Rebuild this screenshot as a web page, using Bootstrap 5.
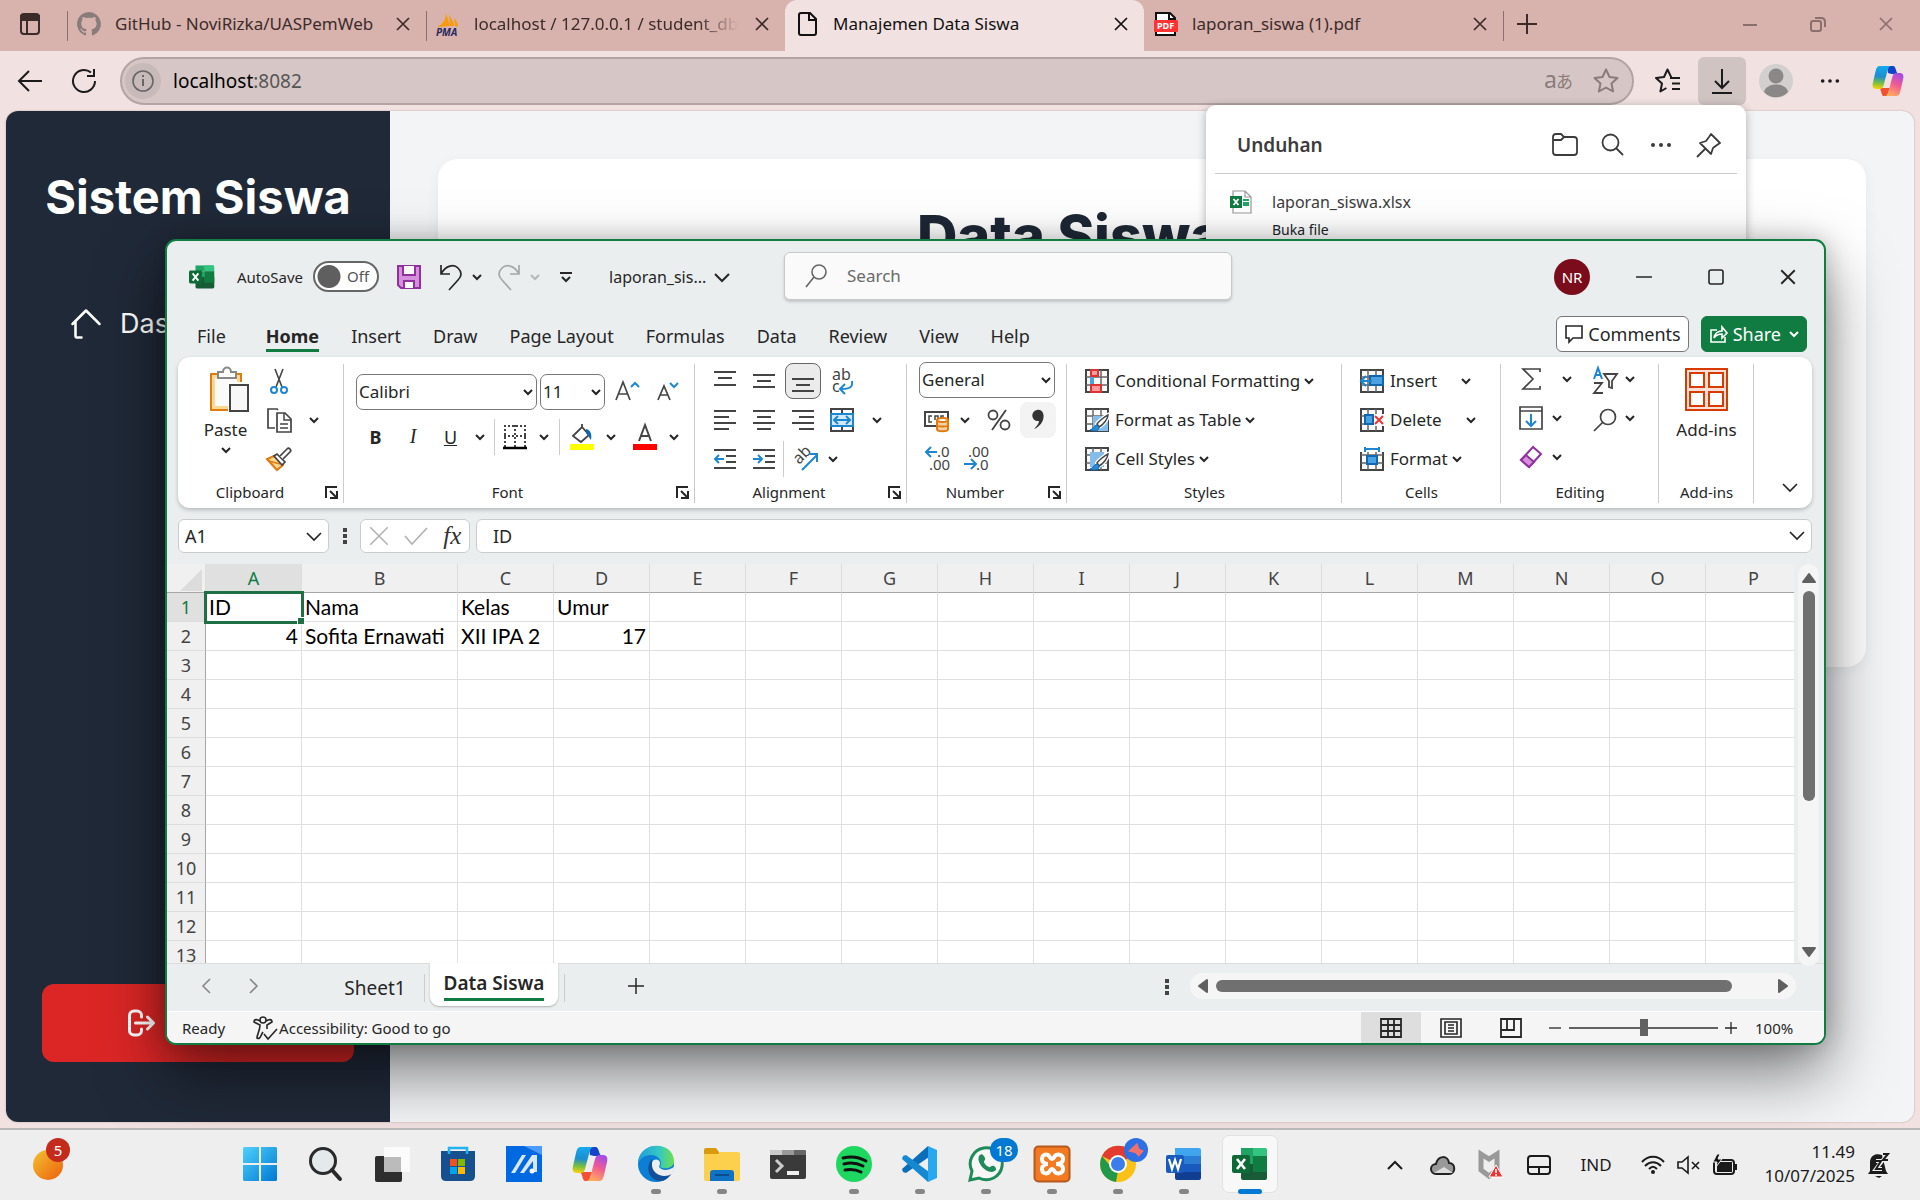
<!DOCTYPE html>
<html lang="id">
<head>
<meta charset="utf-8">
<meta name="viewport" content="width=device-width, initial-scale=1">
<title>Manajemen Data Siswa</title>
<link href="https://cdn.jsdelivr.net/npm/bootstrap@5.3.0/dist/css/bootstrap.min.css" rel="stylesheet">
<style>
:root{--xl:#107c41;--ink:#262626}
body{font-family:"Noto Sans","Open Sans",sans-serif;font-size:17px;line-height:24px;background:#f1e2e1;color:var(--ink);height:100vh;overflow:hidden}
svg{display:block;flex:none;fill:none;stroke:currentColor;stroke-width:2;overflow:visible}
button{color:inherit}
.ico-btn{border:0;background:none;padding:0;display:flex;align-items:center;justify-content:center;flex:none}
.w48{width:48px;height:48px;border-radius:6px}
/* browser chrome */
.tab-strip{background:#d8b2ad;height:51px;color:#3b2c2a}
.tab-menu{width:67px;padding-right:8px;height:47px}
.web-tab{width:359px;height:51px;padding:0 15px 4px 10px;position:relative;font-size:17px;color:inherit}
.web-tab a{color:inherit;text-decoration:none}
.web-tab .ttl{overflow:hidden;white-space:nowrap;flex:1 1 0;margin-left:14px}
.web-tab .fade-end{-webkit-mask-image:linear-gradient(90deg,#000 85%,transparent)}
.bar-left::before{content:"";position:absolute;left:0;top:11px;height:30px;width:1px;background:#8a6f6c}
.web-tab.current{background:#f1e2e1;color:#111;border-radius:12px 12px 0 0}
.win-ctl{width:68px;height:47px;color:#8a6f6c}
.nav-row{height:60px;padding:0 8px 0 6px;color:#1b1b1b}
.address{height:48px;background:#d6c7c6;border:2px solid #b3a3a2;border-radius:24px;padding:0 2px 0 3px;margin:0 6px 0 12px}
.address .port{font-size:19px;color:#555}
.site-info{width:36px;height:36px;border-radius:50%;background:#c9baba;color:#666}
.dim{color:#8a7c7b}
.dl-on{background:#d0c4c3}
/* web page */
.viewport-page{margin:0 6px 6px;border-radius:12px;overflow:hidden;background:#f3f4f6;box-shadow:0 0 2px #b9a09e}
.side{width:384px;background:#202938;color:#fff;padding:55px 36px 60px;font-family:Inter,sans-serif}
.side h2{font-size:47px;line-height:62px;font-weight:700;margin:0 -10px;white-space:nowrap;text-align:center}
.side .menu-link{color:#fff;text-decoration:none;font-size:27px;line-height:40px;margin-top:76px;padding-left:26px}
.logout{background:#dc2626;color:#fff;border:0;border-radius:12px;height:78px;font-size:24px}
.panel{border-radius:20px;height:508px;margin:48px;background:#fff;box-shadow:0 4px 14px rgba(0,0,0,.05)}
.panel h1{font-family:Inter,sans-serif;font-weight:800;font-size:56px;line-height:72px;color:#1e2836;margin:41px 0 0;padding-right:164px;text-align:center}
.dl-pop{position:absolute;top:105px;right:174px;width:540px;height:300px;background:#fff;border-radius:10px;box-shadow:0 2px 10px rgba(0,0,0,.3);color:#3c3c3c;z-index:5}
.dl-head{height:69px;margin:0 9px;padding:11px 4px 0 22px;border-bottom:1px solid #ccc}
.dl-head h2{font-size:19px;line-height:26px;font-weight:600;margin:0}
/* spreadsheet window */
.xl-win{position:absolute;left:165px;right:94px;top:239px;z-index:10;border:2px solid var(--xl);border-radius:11px;background:#eaeeef;overflow:hidden;box-shadow:0 0 24px rgba(0,0,0,.2)}
.xl-shade{position:absolute;left:165px;right:94px;top:239px;height:806px;border-radius:11px;z-index:9;box-shadow:0 28px 64px rgba(0,0,0,.5)}
.xl-title{height:71px;padding-left:22px}
.xl-title .auto{font-size:15px}
.toggle-pill{position:relative;margin-left:10px}
.toggle-pill input{appearance:none;display:block;width:66px;height:31px;margin:0;border:2px solid #666;border-radius:16px;background:radial-gradient(circle at 14px 50%,#5f5f5f 11px,#fff 12px)}
.toggle-pill span{position:absolute;right:10px;top:3px;font-size:15px;line-height:24px;color:#555}
.xl-search{position:absolute;left:617px;top:11px;width:448px;height:48px;background:#fafafa;border:1px solid #c8caca;border-radius:6px;box-shadow:0 2px 3px rgba(0,0,0,.18);padding:0 20px}
.xl-search input{border:0;background:none;outline:0;font-size:17px;width:300px;margin-left:18px}
.xl-search input::placeholder{color:#6a6a6a;opacity:1}
.me{width:36px;height:36px;border-radius:50%;background:#7a0c1c;color:#fff;font-size:15px;margin-right:18px}
.ctl72{width:72px;height:48px}
.xl-tabs{height:45px;padding:0 17px 0 30px}
.xl-tabs nav{gap:32px}
.xl-tabs nav a{color:var(--ink);text-decoration:none;font-size:18px;line-height:24px;padding-bottom:1px;border-bottom:3px solid transparent;margin-top:12px}
.xl-tabs nav a.on{font-weight:700;border-color:var(--xl)}
.xl-tabs nav a:first-child{margin-right:8px}
.pill{height:36px;border-radius:6px;font-size:18px;padding:0 7px;margin-top:4px;border:1px solid #777;background:#fff}
.pill.go{background:var(--xl);border-color:var(--xl);color:#fff;margin-left:12px}
.ribbon{margin:0 12px 11px 11px;height:151px;background:#fff;border-radius:12px;box-shadow:0 2px 4px rgba(0,0,0,.22);padding:4px 0 0}
.grp{position:relative;height:146px;flex:none}
.grp::after{content:"";position:absolute;right:0;top:3px;bottom:4px;width:1px;background:#ccc}
.grp-name{height:28px;font-size:15px;line-height:26px;text-align:center}
.grp-name .launch{position:absolute;right:6px;bottom:8px;width:13px;height:13px}
.has-launch{padding-right:24px}
.g-clip{width:166px}.g-font{width:351px}.g-align{width:212px}.g-num{width:160px}.g-sty{width:275px}.g-cell{width:159px}.g-edit{width:158px}.g-add{width:95px}
.grp-body{height:118px;padding:0 0 0 12px}
.g-font .grp-body{padding-top:13px}
.g-align .grp-body{padding-left:10px}
.g-sty .grp-body,.g-cell .grp-body{padding-left:18px}
.paste-btn{width:55px;gap:4px;padding-top:6px;margin-left:8px}
.b39{width:39px;height:39px;border-radius:6px}
.b36{width:36px;height:36px;border-radius:8px}
.chv{width:20px;height:36px}
.rb{height:39px;font-size:17px;gap:6px;white-space:nowrap}
.sep{width:1px;height:36px;background:#ccc}
.picked{background:#ebebeb;border:1px solid #666}
.hov{background:#f3f3f3}
.box-sel{appearance:none;height:36px;border:1px solid #777;border-radius:7px;font-size:17px;line-height:24px;padding:0 2px;color:var(--ink);background:#fff url("data:image/svg+xml,%3Csvg xmlns='http://www.w3.org/2000/svg' width='10' height='8'%3E%3Cpath d='M1 2l4 4 4-4' fill='none' stroke='%23222' stroke-width='2'/%3E%3C/svg%3E") no-repeat right 3px center}
.fbar{padding:0 12px 0 11px;height:34px;margin-bottom:11px}
.fbox{background:#fff;border:1px solid #ccc;border-radius:6px;height:34px}
.fbox input{border:0;background:none;outline:0;min-width:0;font-size:18px;font-family:"Noto Sans",sans-serif;color:var(--ink)}
.serif-i{font:italic 20px "Liberation Serif",serif}
.fx{font-size:25px;color:#333}
.faint{color:#b3b3b3}
.sheet-area{height:399px}
.sheet-view{overflow:hidden;background:#fff;min-width:0}
.cells{table-layout:fixed;width:1863px;border-collapse:separate;border-spacing:0;font-family:Lato,sans-serif;font-size:21px;line-height:28px;color:#000}
.cells th{background:#f0f0f0;color:#444;font-weight:400;text-align:center;border-right:1px solid #ddd;border-bottom:1px solid #ddd;padding:0}
.cells thead th{height:29px;border-bottom:1px solid #a6a6a6;font-family:"Noto Sans",sans-serif;font-size:18px}
.cells tbody th{border-right:1px solid #a6a6a6;font-family:"Noto Sans",sans-serif;font-size:18px}
.cells td{height:29px;padding:0 3px;border-right:1px solid #dfdfdf;border-bottom:1px solid #dfdfdf;white-space:nowrap}
.cells .hot{background:#e0e0e0;color:var(--xl)}
.cells .cur{outline:3px solid #1d7044;outline-offset:-1px;position:relative}
.cells .cur::after{content:"";position:absolute;right:-4px;bottom:-4px;width:6px;height:6px;background:#1d7044;border:1px solid #fff;box-sizing:content-box}
.corner{margin:4px 3px 0 auto}
.vbar{width:24px;background:#f5f5f5;border-radius:12px;margin:0 5px 0 4px;padding:9px 0;height:402px}
.vbar i{width:12px;height:210px;border-radius:6px;background:#707070}
.tabs-row{height:48px;border-top:1px solid #dcdcdc;font-size:19px}
.tabs-row button{white-space:nowrap}
.sheet-nav{width:48px;height:44px;color:#888}
.sheet-on{background:#fff;height:43px;margin-top:-1px;width:128px;border-radius:0 0 9px 9px;box-shadow:0 1px 2px rgba(0,0,0,.25);font-weight:600}
.sheet-on span{border-bottom:3px solid var(--xl);line-height:28px;padding-bottom:1px}
.tick{height:28px;margin-top:10px}
.hbar{width:606px;height:26px;background:#f5f5f5;border-radius:13px;padding:0 8px;margin:9px 28px 0 20px}
.hbar i{width:516px;height:12px;border-radius:6px;background:#707070}
.status-row{height:32px;background:#f5f5f5;border-top:1px solid #fff;font-size:15px;padding-left:15px}
.vw{width:60px;height:32px}
.vw.on{background:#dedede}
.zoom-in{appearance:none;width:149px;height:20px;margin:0 7px 0 8px;background:linear-gradient(#616161,#616161) center/100% 2px no-repeat}
.zoom-in::-webkit-slider-thumb{appearance:none;width:8px;height:17px;background:#616161}
.zoom-pct{width:40px;margin:0 29px 0 18px}
/* taskbar */
.task-row{height:72px;background:#eee;border-top:2px solid #b9b9b9;position:relative;z-index:20;color:#1b1b1b}
.wx{width:227px;height:70px;padding-left:31px}
.app{width:66px;height:70px;position:relative;padding-top:1px}
.app svg{width:36px;height:36px;stroke:none;margin-bottom:3px}
.app.live::after{content:"";position:absolute;bottom:6px;left:28px;width:10px;height:5px;border-radius:3px;background:#858585}
.app.front::before{content:"";position:absolute;inset:5px 5px 7px;background:#f8f8f8;border:1px solid #e2e2e2;border-radius:7px}
.app.front svg{position:relative}
.app.front::after{left:21px;width:24px;background:#0078d4}
.app .mini{position:absolute;width:24px;height:24px;top:8px;right:3px}
.num{position:absolute;border-radius:14px;color:#fff;font-size:15px;line-height:24px;text-align:center}
.num.blue{background:#0078d4;width:28px;height:24px;right:1px;top:8px}
.num.red{background:#c42b1c;width:24px;height:24px;left:46px;top:8px}
.tray{width:48px;height:48px}
.tray.slim{width:36px}
.clock{width:112px;font-size:17px;line-height:24px;text-align:right;padding-bottom:2px}
</style>
</head>
<body class="d-flex flex-column">
<svg width="0" height="0" class="position-absolute" aria-hidden="true">
<symbol id="dn" viewBox="0 0 10 10"><path d="M1 3l4 4 4-4"/></symbol>
<symbol id="x" viewBox="0 0 16 16"><path d="M2 2l12 12M14 2L2 14" stroke-width="1.700"/></symbol>
<symbol id="la" viewBox="0 0 13 13"><path d="M1 12V1h11M5 5l6 6M12 5v7H5"/></symbol>
<symbol id="dots" viewBox="0 0 24 24"><g fill="currentColor" stroke="none"><circle cx="4" cy="12" r="2"/><circle cx="12" cy="12" r="2"/><circle cx="20" cy="12" r="2"/></g></symbol>
<symbol id="xlogo" viewBox="0 0 36 36"><path fill="#21a366" d="M9 2h25v8H9z"/><path fill="#33c481" d="M21 2h12a2 2 0 012 2v6H21z"/><path fill="#107c41" d="M21 10h14v8H21z"/><path fill="#21a366" d="M9 10h12v8H9z"/><path fill="#185c37" d="M9 18h26v14a2 2 0 01-2 2H11a2 2 0 01-2-2z"/><path fill="#107c41" d="M21 18h14v8H21z"/><rect x="0" y="9" width="18" height="18" rx="2" fill="#0e6b38"/><path d="M5 13l8 10M13 13L5 23" stroke="#fff" stroke-width="2.600" fill="none"/></symbol>
<symbol id="cop" viewBox="0 0 36 36">
<linearGradient id="c1" x1=".4" y1="0" x2=".3" y2="1"><stop stop-color="#16a8ee"/><stop offset=".45" stop-color="#1a8fd0"/><stop offset=".75" stop-color="#7cc03c"/><stop offset="1" stop-color="#fbd20a"/></linearGradient>
<linearGradient id="c2" x1=".7" y1="0" x2=".3" y2="1"><stop stop-color="#a34bea"/><stop offset=".45" stop-color="#f05a93"/><stop offset="1" stop-color="#ffb05c"/></linearGradient>
<path d="M17 1h7c3 0 3 9 6 9h-8l-4-1z" fill="#1443c8"/><path d="M12 26h8l-3 9h-4c-3 0-2-9-6-9z" fill="#f25032"/>
<path d="M9 1h13c-3 0-4 3-5 7l-4 15c-1 3-2 4-5 4H5c-4 0-5-3-4-7L4 7c1-4 2-6 5-6z" fill="url(#c1)"/>
<path d="M27 35H14c3 0 4-3 5-7l4-15c1-3 2-4 5-4h3c4 0 5 3 4 7l-3 13c-1 4-2 6-5 6z" fill="url(#c2)"/></symbol>
<symbol id="gridbox" viewBox="0 0 24 24"><rect x="1" y="1" width="22" height="22" fill="#fafafa" stroke="#444" stroke-width="2"/><path d="M1 8h22M1 16h22M8 1v22M16 1v22" stroke="#666" stroke-width="1.500"/></symbol>
<symbol id="brush" viewBox="0 0 24 24"><path d="M23 7c-4 2-10 7-11 9l2 3c4-2 9-8 9-12z" fill="#fff" stroke="#fff" stroke-width="4"/><path d="M23 7c-4 2-10 7-11 9l2 3c4-2 9-8 9-12z" fill="#fff" stroke="#444" stroke-width="1.500"/><path d="M12 17c-3 0-3 4-7 5 4 2 10 1 9-3z" fill="#2a8ad4" stroke="#1066b0" stroke-width="1"/></symbol>
</svg>

<header>
  <div class="tab-strip d-flex">
    <button class="ico-btn tab-menu" aria-label="Menu tab"><svg width="22" height="22" viewBox="0 0 22 22"><rect x="2" y="1" width="18" height="20" rx="3"/><path d="M2 3h18v4H2z" fill="currentColor"/><path d="M8 7v13"/></svg></button>
    <div class="web-tab bar-left d-flex align-items-center"><svg class="dim" width="24" height="24" viewBox="0 0 24 24"><path stroke="none" fill="currentColor" d="M12 0a12 12 0 00-3.800 23.400c.6.1.8-.3.8-.6v-2.200c-3.300.7-4-1.400-4-1.400-.6-1.400-1.400-1.800-1.400-1.800-1-.7.1-.7.1-.7 1.200.1 1.800 1.200 1.800 1.200 1.100 1.900 2.900 1.300 3.500 1 .1-.8.4-1.300.8-1.600-2.700-.3-5.500-1.300-5.500-6 0-1.300.5-2.400 1.200-3.200-.1-.3-.5-1.500.1-3.200 0 0 1-.3 3.300 1.200a11.500 11.500 0 016 0C17.300 4.600 18.300 5 18.300 5c.7 1.700.2 2.900.1 3.200.8.8 1.200 1.900 1.200 3.200 0 4.600-2.800 5.600-5.500 5.900.4.4.8 1.100.8 2.200v3.300c0 .3.2.7.8.6A12 12 0 0012 0z"/></svg><a class="ttl" href="#">GitHub - NoviRizka/UASPemWeb</a><button class="ico-btn ms-3" aria-label="Tutup tab"><svg width="16" height="16"><use href="#x"/></svg></button></div>
    <div class="web-tab bar-left d-flex align-items-center"><svg width="24" height="24" viewBox="0 0 24 24"><path d="M1 15C7 12 10 7 10 1l4 13zM13 3c3 4 5 8 5 11h-4zM18 6c3 3 4 6 4 9l-3-1z" fill="#f89c0e" stroke="none"/><text x="0" y="24" font-size="10" font-weight="bold" font-style="italic" fill="#27285c" stroke="none">PMA</text></svg><a class="ttl fade-end" href="#">localhost / 127.0.0.1 / student_db</a><button class="ico-btn ms-3" aria-label="Tutup tab"><svg width="16" height="16"><use href="#x"/></svg></button></div>
    <div class="web-tab current d-flex align-items-center"><svg width="24" height="24" viewBox="0 0 24 24"><path d="M4 3q0-2 2-2h9l6 6v14q0 2-2 2H6q-2 0-2-2zM14 1v7h7"/></svg><a class="ttl" href="#">Manajemen Data Siswa</a><button class="ico-btn ms-3" aria-label="Tutup tab"><svg width="16" height="16"><use href="#x"/></svg></button></div>
    <div class="web-tab d-flex align-items-center"><svg width="24" height="24" viewBox="0 0 24 24"><path d="M2 1h14l5 5v17H2z" fill="#fff" stroke="#111"/><path d="M15 1v6h6" stroke="#111"/><rect y="8" width="24" height="12" rx="1" fill="#f33" stroke="none"/><text x="3" y="17" font-size="9" font-weight="bold" fill="#fff" stroke="none">PDF</text></svg><a class="ttl" href="#">laporan_siswa (1).pdf</a><button class="ico-btn ms-3" aria-label="Tutup tab"><svg width="16" height="16"><use href="#x"/></svg></button></div>
    <div class="bar-left position-relative"><button class="ico-btn w48" aria-label="Tab baru"><svg width="22" height="22" viewBox="0 0 22 22"><path d="M11 1v20M1 11h20"/></svg></button></div>
    <div class="ms-auto d-flex">
      <button class="ico-btn win-ctl" aria-label="Minimalkan"><svg width="16" height="16"><path d="M1 9h14"/></svg></button>
      <button class="ico-btn win-ctl" aria-label="Pulihkan"><svg width="16" height="16"><rect x="1" y="5" width="10" height="10" rx="2"/><path d="M5 2h6q4 0 4 4v5"/></svg></button>
      <button class="ico-btn win-ctl" aria-label="Tutup"><svg width="16" height="16"><use href="#x"/></svg></button>
    </div>
  </div>
  <div class="nav-row d-flex align-items-center">
    <button class="ico-btn w48" aria-label="Kembali"><svg width="26" height="26" viewBox="0 0 26 26"><path d="M25 13H2M12 3L2 13l10 10"/></svg></button>
    <button class="ico-btn w48" style="margin-left:6px" aria-label="Muat ulang"><svg width="26" height="26" viewBox="0 0 26 26"><path d="M24 13a11 11 0 11-4-8.500M23 1v7h-7"/></svg></button>
    <div class="address d-flex align-items-center flex-grow-1">
      <button class="ico-btn site-info" aria-label="Info situs"><svg width="22" height="22" viewBox="0 0 22 22"><circle cx="11" cy="11" r="10" stroke-width="1.600"/><path d="M11 9v7M11 5v2"/></svg></button>
      <a class="text-decoration-none port ms-2 ps-1 flex-grow-1" href="#"><span class="text-black">localhost</span>:8082</a>
      <button class="ico-btn w48 dim" aria-label="Terjemahkan"><svg width="28" height="24" viewBox="0 0 28 24" fill="currentColor" stroke="none"><text x="0" y="19" font-size="23" fill="currentColor" stroke="none" font-family="Noto Sans">a</text><text x="12" y="19" font-size="17" fill="currentColor" stroke="none" font-family="Noto Sans CJK JP">あ</text></svg></button>
      <button class="ico-btn w48 dim" aria-label="Favorit"><svg width="26" height="26" viewBox="0 0 26 26"><path stroke-linejoin="round" d="M13 1.500l3.500 7.500 8 1-6 5.500 1.600 8L13 19.500l-7.100 4 1.600-8-6-5.500 8-1z"/></svg></button>
    </div>
    <div class="d-flex" style="gap:6px">
    <button class="ico-btn w48 ms-1" aria-label="Daftar favorit"><svg width="26" height="26" viewBox="0 0 26 26"><path stroke-linejoin="round" d="M17 9l-1-.1L12.500 1.500 9 9l-8 1 6 5.500-1.600 8 6-3.500M15 10h10M17 15.500h8M17 21h8"/></svg></button>
    <button class="ico-btn w48 dl-on" aria-label="Unduhan"><svg width="26" height="26" viewBox="0 0 26 26"><path d="M13 1v18M6 13l7 7 7-7M3 25h20"/></svg></button>
    <button class="ico-btn w48" aria-label="Profil"><svg width="34" height="34" viewBox="0 0 34 34"><g stroke="none"><circle cx="17" cy="17" r="17" fill="#d2d0ce"/><circle cx="17" cy="12" r="7.500" fill="#8a8886"/><path d="M5 28c2-10 22-10 24 0-6 7-18 7-24 0z" fill="#8a8886"/></g></svg></button>
    <button class="ico-btn w48" aria-label="Lainnya"><svg width="22" height="22"><use href="#dots"/></svg></button>
    <button class="ico-btn w48 ms-1" aria-label="Copilot"><svg width="34" height="32" style="stroke:none"><use href="#cop"/></svg></button>
    </div>
  </div>
</header>

<div class="viewport-page d-flex flex-grow-1">
  <aside class="side d-flex flex-column">
    <h2>Sistem Siswa</h2>
    <a class="menu-link d-flex align-items-center" href="#"><svg width="36" height="36" viewBox="0 0 24 24" stroke-linecap="round" stroke-linejoin="round"><path d="M3 12l2-2m0 0l7-7 9 9M5 10v10a1 1 0 001 1h3" stroke-width="1.700"/></svg><span class="ms-3">Dashboard</span></a>
    <button class="logout d-flex align-items-center mt-auto"><svg width="36" height="36" viewBox="0 0 24 24" stroke-linecap="round" stroke-linejoin="round" style="margin-left:74px"><path d="M17 16l4-4m0 0l-4-4m4 4H9m4 4v1a3 3 0 01-3 3H8a3 3 0 01-3-3V7a3 3 0 013-3h2a3 3 0 013 3v1"/></svg><span class="ms-2">Logout</span></button>
  </aside>
  <main class="flex-grow-1"><section class="panel d-flex flex-column"><h1>Data Siswa</h1></section></main>
</div>

<section class="dl-pop" aria-label="Unduhan">
  <div class="dl-head d-flex align-items-center">
    <h2 class="me-auto">Unduhan</h2>
    <button class="ico-btn w48" aria-label="Buka folder"><svg width="26" height="24" viewBox="0 0 26 24"><path stroke-width="1.800" d="M1 4q0-3 3-3h5l3 3h10q3 0 3 3v12q0 3-3 3H4q-3 0-3-3zM1 7h8l3-3"/></svg></button>
    <button class="ico-btn w48" aria-label="Cari"><svg width="24" height="24" viewBox="0 0 24 24"><circle cx="9.500" cy="9.500" r="8" stroke-width="1.800"/><path d="M15 15l7 7" stroke-width="1.800"/></svg></button>
    <button class="ico-btn w48" aria-label="Opsi"><svg width="24" height="24"><use href="#dots"/></svg></button>
    <button class="ico-btn w48" aria-label="Sematkan"><svg width="26" height="26" viewBox="0 0 26 26"><path stroke-linejoin="round" stroke-width="1.800" d="M15 2l9 9-3 2-4 3-2 6-11-11 6-2 3-4zM9 17l-8 8"/></svg></button>
  </div>
  <div class="d-flex px-4 pt-3">
    <svg width="22" height="24" viewBox="0 0 22 24"><path d="M3 1h12l6 6v16H3zM15 1v6h6" fill="#fff" stroke="#999" stroke-width="1.200"/><rect y="6" width="12" height="12" fill="#107c41" stroke="none"/><path d="M3.500 9l5 6M8.500 9l-5 6" stroke="#fff" stroke-width="1.800"/><path d="M13 10h6M13 13h6M13 15h6" stroke="#21a366"/></svg>
    <div style="margin-left:20px;font-size:16px"><div>laporan_siswa.xlsx</div><a href="#" class="text-decoration-none d-block text-dark" style="font-size:14px;line-height:32px">Buka file</a></div>
  </div>
</section>

<div class="xl-shade"></div>
<section class="xl-win" aria-label="laporan_siswa - Excel">
  <div class="xl-title d-flex align-items-center position-relative">
    <svg width="26" height="26" style="stroke:none"><use href="#xlogo"/></svg>
    <label class="auto d-flex align-items-center" style="margin-left:22px">AutoSave<span class="toggle-pill"><input type="checkbox"><span>Off</span></span></label>
    <button class="ico-btn" style="margin-left:17px" aria-label="Save"><svg width="26" height="26" viewBox="0 0 26 26"><path d="M2 2h22v22H5l-3-3z" fill="#d590dc" stroke="#9230a0"/><path d="M7 2v9h12V2M8 24v-7h10v7" fill="#fafafa" stroke="#9230a0"/></svg></button>
    <button class="ico-btn ms-3" aria-label="Undo"><svg width="26" height="28" viewBox="0 0 26 28"><path d="M3 2v9h9M3 11C8 2 16 1 20 5s4 8 0 12l-9 10" stroke-width="1.700"/></svg></button>
    <button class="ico-btn ms-2" aria-label="Undo list"><svg width="10" height="10"><use href="#dn"/></svg></button>
    <button class="ico-btn" style="color:#a5a8a8;margin-left:14px" aria-label="Redo"><svg width="26" height="28" viewBox="0 0 26 28"><path d="M23 2v9h-9M23 11C18 2 10 1 6 5s-4 8 0 12l9 10" stroke-width="1.700"/></svg></button>
    <button class="ico-btn ms-2" style="color:#b5b8b8;margin-right:20px" aria-label="Redo list"><svg width="10" height="10"><use href="#dn"/></svg></button>
    <button class="ico-btn" aria-label="Customize toolbar"><svg width="12" height="12" viewBox="0 0 12 12"><path d="M0 2h12M2 6l4 4 4-4"/></svg></button>
    <button class="ico-btn" style="margin-left:37px;font-size:16px">laporan_sis...<svg class="ms-2" width="16" height="16" viewBox="0 0 16 16"><path d="M1 5l7 7 7-7"/></svg></button>
    <label class="xl-search d-flex align-items-center"><svg width="22" height="24" viewBox="0 0 22 24" style="color:#666"><circle cx="14" cy="8" r="7" stroke-width="1.600"/><path d="M9 13L1 23" stroke-width="1.600"/></svg><input type="search" placeholder="Search" aria-label="Search"></label>
    <div class="ms-auto d-flex align-items-center">
      <button class="ico-btn me">NR</button>
      <button class="ico-btn ctl72" aria-label="Minimize"><svg width="16" height="16"><path d="M0 8h16" stroke-width="1.500"/></svg></button>
      <button class="ico-btn ctl72" aria-label="Maximize"><svg width="16" height="16"><rect x="1" y="1" width="14" height="14" rx="2" stroke-width="1.600"/></svg></button>
      <button class="ico-btn ctl72" aria-label="Close"><svg width="18" height="18"><use href="#x"/></svg></button>
    </div>
  </div>
  <div class="xl-tabs d-flex align-items-start">
    <nav class="d-flex me-auto"><a href="#">File</a><a href="#" class="on">Home</a><a href="#">Insert</a><a href="#">Draw</a><a href="#">Page Layout</a><a href="#">Formulas</a><a href="#">Data</a><a href="#">Review</a><a href="#">View</a><a href="#">Help</a></nav>
    <button class="pill d-flex align-items-center gap-1"><svg width="20" height="20" viewBox="0 0 20 20"><path d="M2 2h16v12H9l-4 4v-4H2z" stroke-width="1.600"/></svg>Comments</button>
    <button class="pill go d-flex align-items-center gap-1"><svg width="20" height="20" viewBox="0 0 20 20"><path d="M8 6H2v12h14v-5M5 14c1-5 4-7 8-7V3l5 6-5 5v-4c-4 0-6 1-8 4z" stroke-width="1.600"/></svg>Share<svg class="ms-1" width="10" height="10"><use href="#dn"/></svg></button>
  </div>

  <div class="ribbon d-flex">
    <div class="grp g-clip">
      <div class="grp-body d-flex">
        <button class="ico-btn flex-column h-100 justify-content-start paste-btn"><svg width="44" height="48" viewBox="0 0 44 48" class="ms-2"><path d="M3 7h30v36H3z" fill="#fbd794" stroke="#e07b10"/><path d="M7 11h22v28H7z" fill="#fafafa" stroke="none"/><path d="M10 11V5h5c0-6 8-6 8 0h5v6z" fill="#fff" stroke="#888"/><path d="M20 15h22v31H20z" fill="#fff" stroke="none"/><path d="M22 18h18v26H22z" fill="#f7f7f7" stroke="#444"/></svg><span style="font-size:17px;line-height:22px">Paste</span><svg width="10" height="10"><use href="#dn"/></svg></button>
        <div style="margin-left:6px">
          <button class="ico-btn b39" aria-label="Cut"><svg width="24" height="26" viewBox="0 0 24 26"><path d="M8 1l7 18M16 1L9 19" stroke="#444" stroke-width="1.600"/><g stroke="#1e86d0"><circle cx="7" cy="22" r="3"/><circle cx="17" cy="22" r="3"/></g></svg></button>
          <button class="ico-btn b39" aria-label="Copy"><svg width="26" height="26" viewBox="0 0 26 26"><path d="M9 21H2V2h9l1 1" stroke="#444" stroke-width="1.700"/><path d="M11 6h8l6 6v13H11z" fill="#fff" stroke="#444" stroke-width="1.700"/><path d="M18 6v7h7M14 17h8M14 21h8" stroke="#444" stroke-width="1.500"/></svg></button>
          <button class="ico-btn b39" aria-label="Format Painter"><svg width="26" height="24" viewBox="0 0 26 24"><path d="M8 9l-7 3 10 11 6-5z" fill="#fbd794" stroke="#e07b10"/><path d="M3 14l11 3" stroke="#e07b10" stroke-width="1.500"/><path d="M11 7l8 8-3 3-8-9z" fill="#fff" stroke="#444" stroke-width="1.700"/><path d="M14 9l7-7c2-2 5 1 3 3l-7 7" fill="#fff" stroke="#444" stroke-width="1.700"/></svg></button>
        </div>
        <button class="ico-btn chv align-self-center" style="margin-left:6px" aria-label="Copy options"><svg width="10" height="10"><use href="#dn"/></svg></button>
      </div>
      <div class="grp-name" style="padding-right:22px">Clipboard<button class="ico-btn launch" aria-label="Clipboard settings"><svg width="13" height="13"><use href="#la"/></svg></button></div>
    </div>

    <div class="grp g-font">
      <div class="grp-body">
        <div class="d-flex align-items-center" style="gap:3px">
          <select class="box-sel" style="width:181px" aria-label="Font"><option>Calibri</option></select>
          <select class="box-sel" style="width:65px" aria-label="Font size"><option>11</option></select>
          <button class="ico-btn b36" aria-label="Increase font size"><svg width="28" height="26" viewBox="0 0 28 26"><path d="M4 21L11 3l7 18M6 15h10" stroke="#444" stroke-width="1.700"/><path d="M19 8l4-4 4 4" stroke="#1e86d0"/></svg></button>
          <button class="ico-btn b36" style="margin-left:2px" aria-label="Decrease font size"><svg width="26" height="24" viewBox="0 0 26 24"><path d="M4 20L10 6l6 14M6 15h8" stroke="#444" stroke-width="1.700"/><path d="M16 3l4 4 4-4" stroke="#1e86d0"/></svg></button>
        </div>
        <div class="d-flex align-items-center" style="margin-top:7px">
          <button class="ico-btn b39 fw-bold" style="font-size:18px">B</button>
          <button class="ico-btn b36 serif-i">I</button>
          <button class="ico-btn b39" style="font-size:18px"><u>U</u></button>
          <button class="ico-btn chv" aria-label="Underline options"><svg width="10" height="10"><use href="#dn"/></svg></button>
          <span class="sep ms-1"></span>
          <button class="ico-btn b39" aria-label="Borders"><svg width="24" height="26" viewBox="0 0 24 26"><path d="M1 2h22M1 12h22M2 1v22M12 1v22M22 1v22" stroke="#444" stroke-dasharray="2 2"/><path d="M0 24h24" stroke="#000" stroke-width="2.500"/></svg></button>
          <button class="ico-btn chv" aria-label="Border options"><svg width="10" height="10"><use href="#dn"/></svg></button>
          <span class="sep" style="margin-left:5px"></span>
          <button class="ico-btn b39" style="margin-left:2px" aria-label="Fill color"><svg width="26" height="28" viewBox="0 0 26 28"><path d="M13 1v4M4 13l9-9 7 8-8 7z" stroke="#444" stroke-width="1.800"/><path d="M17 6c5 1 6 6 5 11-2-2-3-5-5-7z" fill="#1066b0" stroke="none"/><path d="M1 21h24v6H1z" fill="#ff0" stroke="none"/></svg></button>
          <button class="ico-btn chv" aria-label="Fill options"><svg width="10" height="10"><use href="#dn"/></svg></button>
          <button class="ico-btn b39 ms-1" aria-label="Font color"><svg width="24" height="28" viewBox="0 0 24 28"><path d="M6 18L12 2l6 16M8 13h8" stroke="#444"/><path d="M0 21h24v6H0z" fill="red" stroke="none"/></svg></button>
          <button class="ico-btn chv" aria-label="Font color options"><svg width="10" height="10"><use href="#dn"/></svg></button>
        </div>
      </div>
      <div class="grp-name has-launch">Font<button class="ico-btn launch" aria-label="Font settings"><svg width="13" height="13"><use href="#la"/></svg></button></div>
    </div>

    <div class="grp g-align">
      <div class="grp-body">
        <div class="d-flex align-items-center">
          <button class="ico-btn b39" aria-label="Top align"><svg width="22" height="24" viewBox="0 0 22 24"><path d="M0 3h22M4 9h14M0 16h22" stroke="#444"/></svg></button>
          <button class="ico-btn b39" aria-label="Middle align"><svg width="22" height="24" viewBox="0 0 22 24"><path d="M0 6h22M4 12h14M0 18h22" stroke="#444"/></svg></button>
          <button class="ico-btn b39"  aria-label="Bottom align"><span class="picked b36 d-flex align-items-center justify-content-center"><svg width="22" height="24" viewBox="0 0 22 24"><path d="M0 10h22M4 16h14M0 22h22" stroke="#444"/></svg></span></button>
          <button class="ico-btn b39" aria-label="Wrap text"><svg width="24" height="26" viewBox="0 0 24 26"><g stroke="none" fill="#444" font-size="16"><text x="2" y="12">ab</text><text x="2" y="24">c</text></g><path d="M22 13c1 6-2 8-11 8M15 16l-5 5 5 5" stroke="#1e86d0"/></svg></button>
        </div>
        <div class="d-flex align-items-center">
          <button class="ico-btn b39" aria-label="Align left"><svg width="22" height="22" viewBox="0 0 22 22"><path d="M0 2h22M0 8h15M0 14h22M0 20h15" stroke="#444"/></svg></button>
          <button class="ico-btn b39" aria-label="Center"><svg width="22" height="22" viewBox="0 0 22 22"><path d="M0 2h22M4 8h14M0 14h22M4 20h14" stroke="#444"/></svg></button>
          <button class="ico-btn b39" aria-label="Align right"><svg width="22" height="22" viewBox="0 0 22 22"><path d="M0 2h22M7 8h15M0 14h22M7 20h15" stroke="#444"/></svg></button>
          <button class="ico-btn b39" aria-label="Merge"><svg width="24" height="24" viewBox="0 0 24 24"><path d="M1 1h22v22H1zM12 1v22" stroke="#444"/><path d="M1 6h22v12H1z" fill="#d3e9f9" stroke="#1e86d0"/><path d="M4 12h16M8 8l-4 4 4 4M16 8l4 4-4 4" stroke="#1e86d0"/></svg></button>
          <button class="ico-btn chv" style="margin-left:6px" aria-label="Merge options"><svg width="10" height="10"><use href="#dn"/></svg></button>
        </div>
        <div class="d-flex align-items-center">
          <button class="ico-btn b39" aria-label="Decrease indent"><svg width="22" height="22" viewBox="0 0 22 22"><path d="M0 2h22M12 8h10M12 14h10M0 20h22" stroke="#444"/><path d="M10 11H1M5 7l-4 4 4 4" stroke="#1e86d0"/></svg></button>
          <button class="ico-btn b39" aria-label="Increase indent"><svg width="22" height="22" viewBox="0 0 22 22"><path d="M0 2h22M12 8h10M12 14h10M0 20h22" stroke="#444"/><path d="M0 11h9M5 7l4 4-4 4" stroke="#1e86d0"/></svg></button>
          <span class="sep"></span>
          <button class="ico-btn b39" style="margin-left:2px" aria-label="Orientation"><svg width="26" height="26" viewBox="0 0 26 26"><text transform="translate(6 19) rotate(-45)" font-size="16" fill="#444" stroke="none">ab</text><path d="M9 24L24 9M16 8h8v8" stroke="#1e86d0"/></svg></button>
          <button class="ico-btn chv" style="margin-left:-2px" aria-label="Orientation options"><svg width="10" height="10"><use href="#dn"/></svg></button>
        </div>
      </div>
      <div class="grp-name has-launch">Alignment<button class="ico-btn launch" aria-label="Alignment settings"><svg width="13" height="13"><use href="#la"/></svg></button></div>
    </div>

    <div class="grp g-num">
      <div class="grp-body">
        <div style="height:39px;padding-top:1px"><select class="box-sel" style="width:136px" aria-label="Number format"><option>General</option></select></div>
        <div class="d-flex align-items-center">
          <button class="ico-btn b36" aria-label="Accounting format"><svg width="26" height="24" viewBox="0 0 26 24"><path d="M1 4h23v14H1z" stroke="#444"/><path d="M8 8H5v6h3M11 12V8h3v4M17 10V8h3" stroke="#444" stroke-width="1.500"/><path d="M13 12v9c0 3 11 3 11 0v-9" fill="#fbd0a0" stroke="#e07b10"/><ellipse cx="18.500" cy="12" rx="5.500" ry="2" fill="#fff" stroke="#e07b10"/><path d="M13 17c0 2 11 2 11 0" stroke="#e07b10"/></svg></button>
          <button class="ico-btn chv" aria-label="Accounting options"><svg width="10" height="10"><use href="#dn"/></svg></button>
          <button class="ico-btn b39 ms-1" aria-label="Percent style"><svg width="24" height="24" viewBox="0 0 24 24" stroke="#444"><g stroke="#444" stroke-width="1.800"><circle cx="6" cy="7" r="4.500"/><circle cx="18" cy="17" r="4.500"/><path d="M19 2L5 22"/></g></svg></button>
          <button class="ico-btn b36 hov" style="margin-left:2px" aria-label="Comma style"><svg width="14" height="22" viewBox="0 0 14 22"><path d="M6 1c5-1 8 4 6 10-2 5-6 8-9 9 3-3 5-6 5-8-8 1-9-10-2-11z" fill="#333" stroke="none"/></svg></button>
        </div>
        <div class="d-flex align-items-center">
          <button class="ico-btn b39" style="margin-left:-1px" aria-label="Increase decimal"><svg width="26" height="26" viewBox="0 0 26 26"><g fill="#444" stroke="none" font-size="15"><text x="12" y="11">.0</text><text x="4" y="24">.00</text></g><path d="M12 6H1M6 1L1 6l5 5" stroke="#1e86d0"/></svg></button>
          <button class="ico-btn b39" aria-label="Decrease decimal"><svg width="26" height="26" viewBox="0 0 26 26"><g fill="#444" stroke="none" font-size="15"><text x="4" y="11">.00</text><text x="12" y="24">.0</text></g><path d="M0 18h12M7 13l5 5-5 5" stroke="#1e86d0"/></svg></button>
        </div>
      </div>
      <div class="grp-name has-launch">Number<button class="ico-btn launch" aria-label="Number settings"><svg width="13" height="13"><use href="#la"/></svg></button></div>
    </div>

    <div class="grp g-sty">
      <div class="grp-body">
        <button class="ico-btn rb"><svg width="24" height="24" viewBox="0 0 24 24"><use href="#gridbox"/><path d="M6 1h7v6H6zM6 16h10v7H6z" fill="#ff9a9a" stroke="#d33"/><path d="M5 8h4v7H5z" fill="#4aa3e0" stroke="none"/></svg>Conditional Formatting<svg width="10" height="10" style="margin-left:-2px"><use href="#dn"/></svg></button>
        <button class="ico-btn rb"><svg width="24" height="24" viewBox="0 0 24 24"><use href="#gridbox"/><path d="M8 8h15v15H8z" fill="#84bdec" stroke="none"/><use href="#brush"/></svg>Format as Table<svg width="10" height="10" style="margin-left:-2px"><use href="#dn"/></svg></button>
        <button class="ico-btn rb"><svg width="24" height="24" viewBox="0 0 24 24"><use href="#gridbox"/><path d="M5 5h14v15H5z" fill="#84bdec" stroke="none"/><use href="#brush"/></svg>Cell Styles<svg width="10" height="10" style="margin-left:-2px"><use href="#dn"/></svg></button>
      </div>
      <div class="grp-name">Styles</div>
    </div>

    <div class="grp g-cell">
      <div class="grp-body">
        <button class="ico-btn rb"><svg width="24" height="24" viewBox="0 0 24 24"><use href="#gridbox"/><path d="M10 7h13v9H10z" fill="#4aa3e0" stroke="#1066b0"/><path d="M12 12H2M6 7l-5 5 5 5" stroke="#1e86d0"/></svg>Insert<svg width="10" height="10" style="margin-left:18px"><use href="#dn"/></svg></button>
        <button class="ico-btn rb"><svg width="24" height="24" viewBox="0 0 24 24"><use href="#gridbox"/><path d="M12 6h12v12H12z" fill="#fff" stroke="none"/><path d="M5 7h8v9H5z" fill="#4aa3e0" stroke="#1066b0"/><path d="M15 8l8 8M23 8l-8 8" stroke="#e33"/></svg>Delete<svg width="10" height="10" style="margin-left:18px"><use href="#dn"/></svg></button>
        <button class="ico-btn rb"><svg width="24" height="24" viewBox="0 0 24 24"><use href="#gridbox"/><path d="M0 0h24v5H0z" fill="#fff" stroke="none"/><path d="M5 0v5M19 0v5M5 2h14" stroke="#1e86d0"/><path d="M7 9h10v8H7z" fill="#4aa3e0" stroke="#1066b0"/></svg>Format<svg width="10" height="10" style="margin-left:-2px"><use href="#dn"/></svg></button>
      </div>
      <div class="grp-name">Cells</div>
    </div>

    <div class="grp g-edit">
      <div class="grp-body d-flex">
        <div>
          <div class="d-flex"><button class="ico-btn b36" aria-label="Sum"><svg width="22" height="24" viewBox="0 0 22 24"><path d="M20 5V2H3l10 10L3 22h17v-3" stroke="#444" stroke-width="1.700"/></svg></button><button class="ico-btn chv" style="margin-left:8px" aria-label="Sum options"><svg width="10" height="10"><use href="#dn"/></svg></button></div>
          <div class="d-flex" style="padding-top:3px"><button class="ico-btn b36" aria-label="Fill"><svg width="24" height="24" viewBox="0 0 24 24"><path d="M1 1h22v22H1zM1 5h22" stroke="#444" stroke-width="1.700"/><path d="M12 8v12M7 15l5 5 5-5" stroke="#1e86d0"/></svg></button><button class="ico-btn chv" style="margin-left:-2px" aria-label="Fill options"><svg width="10" height="10"><use href="#dn"/></svg></button></div>
          <div class="d-flex" style="padding-top:3px"><button class="ico-btn b36" aria-label="Clear"><svg width="24" height="24" viewBox="0 0 24 24"><path d="M2 15L14 2l8 7-12 13z" fill="#fff" stroke="#9230a0"/><path d="M2 15l5-5 8 7-5 5z" fill="#d590dc" stroke="#9230a0"/></svg></button><button class="ico-btn chv" style="margin-left:-2px" aria-label="Clear options"><svg width="10" height="10"><use href="#dn"/></svg></button></div>
        </div>
        <div class="ms-2">
          <div class="d-flex"><button class="ico-btn b39" aria-label="Sort and filter"><svg width="26" height="28" viewBox="0 0 26 28"><path d="M2 12L6 1l4 11M3 8h6" stroke="#1e86d0"/><path d="M2 16h8L2 26h9M12 7h13l-5 7v7l-3-1v-6z" stroke="#444" stroke-width="1.800"/></svg></button><button class="ico-btn chv" style="margin-left:-4px" aria-label="Sort options"><svg width="10" height="10"><use href="#dn"/></svg></button></div>
          <div class="d-flex"><button class="ico-btn b39" aria-label="Find"><svg width="24" height="24" viewBox="0 0 24 24"><circle cx="15" cy="9" r="7.500" stroke="#444" stroke-width="1.700"/><path d="M10 14L1 23" stroke="#444" stroke-width="1.700"/></svg></button><button class="ico-btn chv" style="margin-left:-4px" aria-label="Find options"><svg width="10" height="10"><use href="#dn"/></svg></button></div>
        </div>
      </div>
      <div class="grp-name">Editing</div>
    </div>

    <div class="grp g-add">
      <div class="grp-body px-0"><button class="ico-btn flex-column w-100" style="gap:7px;padding-top:7px;font-size:17px"><svg width="43" height="43" viewBox="0 0 43 43"><g fill="#fff" stroke="#d83b01"><path d="M1 1h41v41H1z" fill="#fde0d5"/><path d="M5 5h14v14H5zM24 5h14v14H24zM5 24h14v14H5zM24 24h14v14H24z"/></g></svg>Add-ins</button></div>
      <div class="grp-name">Add-ins</div>
    </div>
    <button class="ico-btn ms-auto align-self-end mb-2" style="width:44px;height:26px" aria-label="Collapse ribbon"><svg width="16" height="16" viewBox="0 0 16 16"><path d="M1 5l7 7 7-7" stroke-width="1.700"/></svg></button>
  </div>

  <div class="fbar d-flex align-items-center">
    <label class="fbox d-flex align-items-center" style="width:151px;padding:0 6px"><input class="w-100 p-0" value="A1" aria-label="Name box"><svg width="16" height="16" viewBox="0 0 16 16"><path d="M1 5l7 7 7-7" stroke-width="1.700"/></svg></label>
    <svg width="31" height="18" viewBox="0 0 31 18"><path d="M14 1h4v4h-4zM14 7h4v4h-4zM14 13h4v4h-4z" fill="#444" stroke="none"/></svg>
    <div class="fbox d-flex align-items-center justify-content-around" style="width:110px">
      <button class="ico-btn faint" aria-label="Cancel"><svg width="20" height="20" viewBox="0 0 16 16"><path d="M1 1l14 14M15 1L1 15" stroke-width="1.300"/></svg></button>
      <button class="ico-btn faint" aria-label="Enter"><svg width="24" height="18" viewBox="0 0 24 18"><path d="M1 9l7 8L23 1" stroke-width="1.700"/></svg></button>
      <button class="ico-btn serif-i fx" aria-label="Insert function">fx</button>
    </div>
    <label class="fbox d-flex align-items-center flex-grow-1" style="margin-left:6px;padding:0 6px 0 16px"><input class="flex-grow-1 p-0" value="ID" aria-label="Formula bar"><svg width="16" height="16" viewBox="0 0 16 16"><path d="M1 4l7 7 7-7" stroke-width="1.700"/></svg></label>
  </div>

  <div class="sheet-area d-flex">
    <div class="sheet-view flex-grow-1">
      <table class="cells">
        <colgroup id="cols"></colgroup>
        <thead><tr id="heads"></tr></thead>
        <tbody id="rows"></tbody>
      </table>
    </div>
    <div class="vbar d-flex flex-column align-items-center">
      <svg width="14" height="10" viewBox="0 0 14 10"><path d="M7 1l6 8H1z" fill="#606060" stroke="#606060" stroke-linejoin="round"/></svg><i class="mt-2"></i>
      <svg class="mt-auto" width="14" height="10" viewBox="0 0 14 10"><path d="M7 9l6-8H1z" fill="#606060" stroke="#606060" stroke-linejoin="round"/></svg>
    </div>
  </div>

  <div class="tabs-row d-flex align-items-start">
    <button class="ico-btn sheet-nav" style="margin-left:15px" aria-label="Previous sheet"><svg width="10" height="16" viewBox="0 0 10 16"><path d="M9 1L2 8l7 7" stroke-width="1.600"/></svg></button>
    <button class="ico-btn sheet-nav" aria-label="Next sheet"><svg width="10" height="16" viewBox="0 0 10 16"><path d="M1 1l7 7-7 7" stroke-width="1.600"/></svg></button>
    <button class="ico-btn" style="width:64px;height:48px;margin-left:65px">Sheet1</button>
    <span class="sep tick" style="margin-left:17px;margin-right:5px"></span>
    <button class="ico-btn sheet-on"><span>Data Siswa</span></button>
    <span class="sep tick" style="margin-left:6px"></span>
    <button class="ico-btn" style="width:48px;height:44px;margin-left:47px" aria-label="New sheet"><svg width="16" height="16"><path d="M8 0v16M0 8h16" stroke-width="1.500"/></svg></button>
    <svg class="ms-auto" width="6" height="18" style="margin-top:14px"><path d="M1 1h4v4H1zM1 7h4v4H1zM1 13h4v4H1z" fill="#444" stroke="none"/></svg>
    <div class="hbar d-flex align-items-center"><svg width="10" height="14" viewBox="0 0 10 14"><path d="M1 7l8-6v12z" fill="#606060" stroke="#606060" stroke-linejoin="round"/></svg><i class="ms-2"></i><svg class="ms-auto" width="10" height="14" viewBox="0 0 10 14"><path d="M9 7L1 1v12z" fill="#606060" stroke="#606060" stroke-linejoin="round"/></svg></div>
  </div>

  <div class="status-row d-flex align-items-center">
    <span>Ready</span>
    <button class="ico-btn" style="margin-left:28px;gap:1px"><svg width="25" height="24" viewBox="0 0 25 24"><circle cx="10" cy="4" r="3" stroke-width="1.500"/><path stroke-width="1.600" d="M7 5C4 3 1 3 1 6l6 3c0 6-3 9-3 13 3 2 4-3 6-6M13 5c3-2 6-2 6 1l-5 3v4M11 18l4 5 9-10"/></svg>Accessibility: Good to go</button>
    <div class="ms-auto d-flex align-items-center">
      <button class="ico-btn vw on" aria-label="Normal"><svg width="22" height="20" viewBox="0 0 22 20"><path d="M1 1h20v18H1zM1 7h20M1 13h20M8 1v18M14 1v18" stroke-width="1.800"/></svg></button>
      <button class="ico-btn vw" aria-label="Page layout"><svg width="22" height="20" viewBox="0 0 22 20"><path d="M1 1h20v18H1zM5 4h12v12H5zM8 7h6M8 10h6M8 13h6" stroke-width="1.600"/></svg></button>
      <button class="ico-btn vw" aria-label="Page break preview"><svg width="22" height="20" viewBox="0 0 22 20"><path d="M1 1h20v18H1zM1 12h13V1M7 1v11" stroke-width="1.800"/></svg></button>
      <button class="ico-btn ms-2" aria-label="Zoom out"><svg width="12" height="12"><path d="M0 6h12" stroke-width="1.300"/></svg></button>
      <input class="zoom-in" type="range" value="50" aria-label="Zoom">
      <button class="ico-btn" aria-label="Zoom in"><svg width="12" height="12"><path d="M0 6h12M6 0v12" stroke-width="1.300"/></svg></button>
      <span class="zoom-pct">100%</span>
    </div>
  </div>
</section>

<footer class="task-row d-flex align-items-center">
  <button class="ico-btn wx justify-content-start position-relative" aria-label="Cuaca"><svg width="34" height="34" viewBox="0 0 34 34"><linearGradient id="sun" x1="0" y1="0" x2="1" y2="1"><stop stop-color="#f2c230"/><stop offset="1" stop-color="#ee5f0c"/></linearGradient><circle cx="17" cy="17" r="15" fill="url(#sun)" stroke="none"/></svg><span class="num red">5</span></button>
  <button class="ico-btn app" aria-label="Start"><svg viewBox="0 0 36 36"><linearGradient id="wn" x1="0" y1="0" x2="1" y2="1"><stop stop-color="#4fd0fb"/><stop offset="1" stop-color="#0078d4"/></linearGradient><path d="M2 1h15v16H1V2zM19 1h15l1 1v15H19zM1 19h16v16H2l-1-1zM19 19h16v15l-1 1H19z" fill="url(#wn)"/></svg></button>
  <button class="ico-btn app" aria-label="Cari"><svg viewBox="0 0 36 36"><circle cx="15" cy="15" r="12.500" fill="#e4e9ec" stroke="#2a2a2a" stroke-width="3"/><path d="M24 24l8 9" stroke="#2a2a2a" stroke-width="4" stroke-linecap="round"/></svg></button>
  <button class="ico-btn app" aria-label="Tampilan tugas"><svg viewBox="0 0 36 36"><rect x="1" y="10" width="27" height="26" rx="2" fill="#2e2e2e"/><rect x="10" y="1" width="26" height="25" rx="1" fill="#fbfbfb"/><path d="M10 11h17v15H10z" fill="#bbb"/></svg></button>
  <button class="ico-btn app" aria-label="Store"><svg viewBox="0 0 36 36"><path d="M1 5h34v25q0 5-5 5H6q-5 0-5-5z" fill="#16508f"/><path d="M9 8V2h18v6" fill="none" stroke="#1fb4ee" stroke-width="2.500"/><path d="M10 13h7v7h-7z" fill="#f25022"/><path d="M18 13h7v7h-7z" fill="#7fba00"/><path d="M10 21h7v7h-7z" fill="#00a4ef"/><path d="M18 21h7v7h-7z" fill="#ffb900"/></svg></button>
  <button class="ico-btn app" aria-label="MyASUS"><svg viewBox="0 0 36 36"><path d="M0 0h36v36H0z" fill="#0068e0"/><path d="M36 0v9L18 0z" fill="#4b9bff"/><path d="M5 27L16 9h4L9 27zM14 27L26 9h5v17h-4V15l-9 12z" fill="#d7e8ff"/><circle cx="26" cy="25" r="2.500" fill="#fff"/></svg></button>
  <button class="ico-btn app" aria-label="Copilot"><svg viewBox="0 0 36 36"><use href="#cop"/></svg></button>
  <button class="ico-btn app live" aria-label="Edge"><svg viewBox="0 0 36 36"><linearGradient id="e1" x1="0" x2="1"><stop stop-color="#1e9de0"/><stop offset=".6" stop-color="#36c8c0"/><stop offset="1" stop-color="#6fe04a"/></linearGradient><circle cx="18" cy="18" r="18" fill="#0c7fd4"/><path d="M0 17C1-5 34-6 36 14c1 8-9 10-14 7 3-5-1-12-9-12S3 13 0 17z" fill="url(#e1)"/><path d="M14 13c-8 9-2 23 10 22 5-1 8-5 10-8-8 4-20 0-20-14z" fill="#13509c"/><path d="M14 17c1-5 8-4 8 0 0 2-1 3-1 4 3 4 9 4 15 0l-2 7c-9 5-21 0-20-11z" fill="#eee"/></svg></button>
  <button class="ico-btn app live" aria-label="File Explorer"><svg viewBox="0 0 36 36"><path d="M0 4q0-2 2-2h10l3 4v5H0z" fill="#d99a0c"/><path d="M0 8h14l2-2h18q2 0 2 2v25q0 2-2 2H2q-2 0-2-2z" fill="#fcd04c"/><path d="M6 35v-8q0-3 3-3h18q3 0 3 3v8z" fill="#0f72c4"/><path d="M11 28h14v2H11z" fill="#0b4d8c"/></svg></button>
  <button class="ico-btn app" aria-label="Terminal"><svg viewBox="0 0 36 36"><rect y="4" width="36" height="29" rx="2" fill="#3a3a3a"/><path d="M1 4h11v5H0V5z" fill="#ccc"/><path d="M12 4h12v5H12z" fill="#999"/><path d="M24 4h11l1 1v4H24z" fill="#666"/><path d="M6 14l6 6-6 6" fill="none" stroke="#ccc" stroke-width="3"/><path d="M17 25h12v4H17z" fill="#eee"/></svg></button>
  <button class="ico-btn app live" aria-label="Spotify"><svg viewBox="0 0 36 36"><circle cx="18" cy="18" r="18" fill="#1ed760"/><path d="M7 12c8-2 16-1 23 3M8 18c7-2 13-1 19 2M9 24c6-1 10-1 16 2" fill="none" stroke="#111" stroke-width="3" stroke-linecap="round"/></svg></button>
  <button class="ico-btn app live" aria-label="VS Code"><svg viewBox="0 0 36 36"><path d="M26 0L0 23l1 3 3 1L27 11z" fill="#0a6fb8"/><path d="M26 36L0 13l1-3 3-1 23 17z" fill="#1489d2"/><path d="M26 0l9 4v28l-9 4z" fill="#27a8f0"/></svg></button>
  <button class="ico-btn app live" aria-label="WhatsApp"><svg viewBox="0 0 36 36"><path d="M2 34l2-9A16 16 0 1111 32z" fill="#f7f7f7" stroke="#1f8a5a" stroke-width="3"/><path d="M12 9c-5 4 3 17 12 17 5-1 5-4 2-6-3-1-4 2-5 1-3-1-5-4-5-5 0-2 2-2 1-4s-3-5-5-3z" fill="#1f8a5a"/></svg><span class="num blue">18</span></button>
  <button class="ico-btn app live" aria-label="XAMPP"><svg viewBox="0 0 36 36"><rect x=".5" y=".5" width="35" height="35" rx="4" fill="#f37a21" stroke="#b55a1c"/><path d="M14 18c-3 0-6-1-6-5s3-5 6-4c2 1 2 4 4 4s2-3 4-4c3-1 7 0 7 4s-4 5-7 5c3 0 7 1 7 5s-4 5-7 4c-2-1-2-4-4-4s-2 3-4 4c-3 1-6 0-6-4s3-5 6-5z" fill="none" stroke="#fff" stroke-width="4"/></svg></button>
  <button class="ico-btn app live" aria-label="Chrome"><svg viewBox="0 0 36 36"><circle cx="18" cy="18" r="18" fill="#fbc116"/><path d="M18 18L2 10A18 18 0 0134 9z" fill="#e33b2e"/><path d="M2 10l10 12 6 3-2 11A18 18 0 012 10z" fill="#22994a"/><circle cx="18" cy="18" r="9" fill="#fff"/><circle cx="18" cy="18" r="7" fill="#3b7ded"/></svg><svg viewBox="0 0 36 36" class="mini"><circle cx="18" cy="18" r="18" fill="#2f6fe6"/><path d="M6 20L20 7l3 9 7 3-8 9-5-5z" fill="#f0706c"/></svg></button>
  <button class="ico-btn app live" aria-label="Word"><svg viewBox="0 0 36 36"><path fill="#41a5ee" d="M9 2h24a2 2 0 012 2v6H9z"/><path fill="#2b7cd3" d="M9 10h26v8H9z"/><path fill="#185abd" d="M9 18h26v8H9z"/><path fill="#103f91" d="M9 26h26v6a2 2 0 01-2 2H11a2 2 0 01-2-2z"/><rect y="9" width="18" height="18" rx="2" fill="#185abd"/><path d="M3 13l3 10 3-9 3 9 3-10" stroke="#fff" stroke-width="2.200" fill="none"/></svg></button>
  <button class="ico-btn app live front" aria-label="Excel"><svg viewBox="0 0 36 36"><use href="#xlogo"/></svg></button>
  <div class="ms-auto d-flex align-items-center">
    <button class="ico-btn tray" aria-label="Ikon tersembunyi"><svg width="16" height="12" viewBox="0 0 16 12"><path d="M1 10l7-7 7 7"/></svg></button>
    <button class="ico-btn tray" aria-label="OneDrive"><svg width="26" height="22" viewBox="0 0 26 22"><path d="M6 20a5 5 0 010-10C8 1 18 1 19 9c7 0 7 11 0 11z" fill="#999" stroke="#222"/><path d="M4 19l10-6 9 6z" fill="#ddd" stroke="none"/></svg></button>
    <button class="ico-btn tray" aria-label="McAfee"><svg width="26" height="28" viewBox="0 0 26 28"><path d="M3 3l8 5 8-5v16l-8 6-8-6z" fill="none" stroke="#999" stroke-width="5"/><path d="M18 14l7 12H11z" fill="#e33" stroke="#fff" stroke-width="1"/><path d="M18 18v4M18 23v2" stroke="#fff" stroke-width="1.500"/></svg></button>
    <button class="ico-btn tray" aria-label="Touchpad"><svg width="24" height="20" viewBox="0 0 24 20"><rect x="1" y="1" width="22" height="18" rx="3"/><path d="M1 12h22M12 12v7"/></svg></button>
    <button class="ico-btn" style="width:66px;font-size:17px">IND</button>
    <button class="ico-btn tray slim" style="margin-left:6px" aria-label="Wi-Fi"><svg width="24" height="20" viewBox="0 0 24 20"><path d="M1 7c6-7 16-7 22 0M4 11c5-5 11-5 16 0M8 14c3-3 5-3 8 0"/><circle cx="12" cy="17" r="2" fill="currentColor" stroke="none"/></svg></button>
    <button class="ico-btn tray slim" aria-label="Suara"><svg width="24" height="20" viewBox="0 0 24 20"><path d="M1 7h4l6-5v16l-6-5H1zM15 7l7 7M22 7l-7 7" stroke-width="1.600"/></svg></button>
    <button class="ico-btn tray slim" aria-label="Baterai"><svg width="26" height="22" viewBox="0 0 26 22"><rect x="2" y="6" width="20" height="14" rx="3"/><path d="M6 9h13v8H6z" fill="currentColor"/><path d="M24 10v6"/><path d="M5 0L1 8h4l-1 5 6-8H6l2-5z" fill="#111" stroke="#eee" stroke-width="1"/></svg></button>
    <div class="clock">11.49<br>10/07/2025</div>
    <button class="ico-btn tray" style="margin-right:17px" aria-label="Notifikasi"><svg width="24" height="28" viewBox="0 0 24 28"><path d="M3 20V12c0-8 6-10 12-8l4 16 2 3H1zM8 25h7l-3 2z" fill="#1b1b1b" stroke="none"/><path d="M9 10h6l-6 8h6M16 3h5l-5 6h5" stroke="#eee" stroke-width="4"/><path d="M9 10h5l-5 8h6M16 3h5l-5 6h5"/></svg></button>
  </div>
</footer>

<script>
const names = 'ABCDEFGHIJKLMNOPQ'.split('');
const data = [['ID','Nama','Kelas','Umur'],[4,'Sofita Ernawati','XII IPA 2',17]];
document.getElementById('cols').innerHTML = '<col style="width:39px">' + names.map(n => `<col style="width:${n === 'B' ? 156 : 96}px">`).join('') + '<col>';
document.getElementById('heads').innerHTML = '<th><svg class="corner" width="22" height="22"><path d="M22 0v22H0z" fill="#dcdcdc" stroke="none"/></svg></th>' + names.map(n => `<th scope="col"${n === 'A' ? ' class="hot"' : ''}>${n}</th>`).join('') + '<th></th>';
let html = '';
for (let r = 0; r < 13; r++) {
  html += `<tr><th scope="row"${r ? '' : ' class="hot"'}>${r + 1}</th>`;
  names.forEach((n, c) => {
    const v = data[r]?.[c] ?? '';
    const cls = [typeof v === 'number' ? 'text-end' : '', !r && !c ? 'cur' : ''].join(' ').trim();
    html += `<td${cls ? ` class="${cls}"` : ''}>${v}</td>`;
  });
  html += '<td></td></tr>';
}
document.getElementById('rows').innerHTML = html;
</script>
<script src="https://cdn.jsdelivr.net/npm/bootstrap@5.3.0/dist/js/bootstrap.bundle.min.js"></script>
</body>
</html>
